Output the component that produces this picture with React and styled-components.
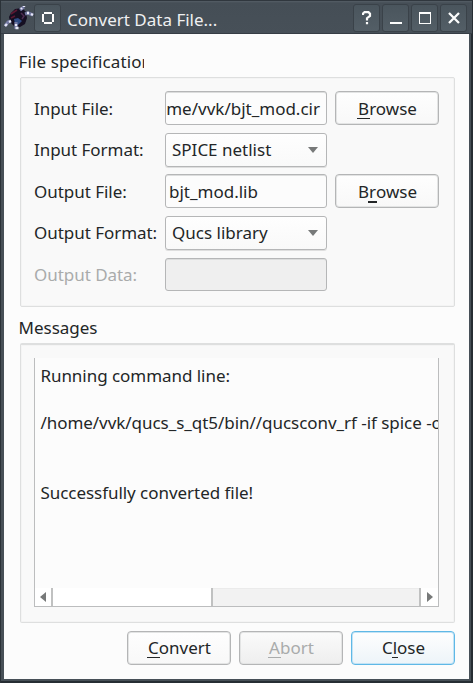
import React from "react";
import styled, { createGlobalStyle } from "styled-components";

const GlobalStyle = createGlobalStyle`
  *, *::before, *::after { box-sizing: border-box; }
  body { margin: 0; background: #2b3137; }
`;

const Window = styled.div`
  width: 473px;
  height: 683px;
  display: flex;
  flex-direction: column;
  padding: 0 4px 4px;
  overflow: hidden;
  font: 17px/24px "Noto Sans", sans-serif;
  letter-spacing: -0.04px;
  color: #232627;
  background: #475057;
  box-shadow: inset 1px 1px 0 #2b3238, inset -2px -2px 0 #262d33;
`;

const TitleBar = styled.header`
  height: 34px;
  flex: none;
  display: flex;
  align-items: flex-start;
  margin: 0 -3px 0 -3px;
  padding: 4px 5px 0 3px;
  border-bottom: 1px solid #363d45;
  background: linear-gradient(#30373e 0, #30373e 1px, #555e66 1px, #454e56 3px, #475058 34px);
`;

const AppIcon = styled.svg`
  width: 30px;
  height: 28px;
  flex: none;
`;

const TitleButton = styled.button`
  width: 27px;
  height: 28px;
  flex: none;
  display: grid;
  place-items: center;
  margin-right: ${(p) => p.$gap ?? 2}px;
  padding: 0;
  border: 1px solid #3a4249;
  border-radius: 3px;
  background: linear-gradient(#4a555d, #535e66);
  svg { display: block; }
`;

const Title = styled.h1`
  flex: 1;
  margin: 0;
  padding-top: 4px;
  font-size: 17px;
  letter-spacing: 0;
  font-weight: 400;
  line-height: 24px;
  color: #eff0f1;
`;

const Body = styled.main`
  flex: 1;
  display: flex;
  flex-direction: column;
  padding: 0 14px 0 16px;
  background: #fcfcfc;
`;

const GroupTitle = styled.h2`
  width: ${(p) => p.$width ?? 200}px;
  height: 24px;
  flex: none;
  margin: ${(p) => p.$top}px 0 0 -2px;
  padding-left: 0.5px;
  overflow: hidden;
  white-space: nowrap;
  font-size: 17px;
  letter-spacing: ${(p) => p.$tracking ?? 0}px;
  font-weight: 400;
`;

const Group = styled.section`
  width: 435px;
  height: ${(p) => p.$height}px;
  flex: none;
  margin-top: ${(p) => p.$top}px;
  padding: ${(p) => p.$pad};
  border: 1px solid #dedfdf;
  border-top-width: ${(p) => p.$edge ?? 1}px;
  border-radius: 2px;
  background: #f9f9f9;
  box-shadow: inset 0 0 0 1px #f4f4f4;
`;

const Form = styled.div`
  display: grid;
  grid-template-columns: 131px 162px 104px;
  grid-template-rows: 34px 34px 34px 34px 33px;
  row-gap: 7.7px;
  column-gap: 0;
`;

const Label = styled.label`
  align-self: center;
  padding-top: ${(p) => (p.$low ? 2 : 0)}px;
  white-space: nowrap;
  color: ${(p) => (p.$disabled ? "#a9abab" : "#232627")};
`;

const Field = styled.div`
  display: flex;
  align-items: center;
  justify-content: ${(p) => (p.$end ? "flex-end" : "flex-start")};
  padding: 2px ${(p) => (p.$end ? 6 : 3)}px 0 ${(p) => (p.$end ? 0 : 3)}px;
  overflow: hidden;
  white-space: nowrap;
  letter-spacing: 0;
  border: 1px solid #b5b6b7;
  border-radius: 3px;
  background: ${(p) => (p.$disabled ? "#efefef" : "#fcfcfc")};
  box-shadow: inset 0 1px 0 #dcdddd;
`;

const Select = styled(Field)`
  justify-content: space-between;
  padding: 0 8px 0 6px;
  background: linear-gradient(#fefefe, #f9f9f9);
  box-shadow: 0 1px 0 #dedede;
`;

const Button = styled.button`
  width: 104px;
  height: 34px;
  flex: none;
  margin-left: ${(p) => p.$left ?? 0}px;
  padding: ${(p) => (p.$low ? "1px 0 0 1px" : "0 0 1px 1px")};
  border: 1px solid ${(p) => (p.$focus ? "#5fb8e6" : "#b4b5b6")};
  border-radius: 4px;
  font: inherit;
  line-height: 24px;
  color: ${(p) => (p.disabled ? "#a9abab" : "#232627")};
  background: ${(p) =>
    p.$focus
      ? "linear-gradient(#fefefe, #edf4f9)"
      : p.disabled
      ? "linear-gradient(#fbfbfb, #eeeeee)"
      : "linear-gradient(#fefefe, #f8f8f8)"};
  box-shadow: inset 0 0 0 1px ${(p) => (p.$focus ? "#c3e3f5" : "#e3e4e4")};
`;

const Mnemonic = styled.span`
  position: relative;
  &::after {
    content: "";
    position: absolute;
    left: -1px;
    right: -1px;
    bottom: ${(p) => (p.$thick ? 0 : 1)}px;
    height: ${(p) => (p.$thick ? 2 : 1)}px;
    background: currentColor;
  }
`;

const Log = styled.div`
  width: 405px;
  height: 249px;
  display: flex;
  flex-direction: column;
  border: 1px solid #bcbdbe;
  border-top: 0;
  background: #fcfcfc;
`;

const LogText = styled.pre`
  height: 230px;
  flex: none;
  margin: 0;
  padding: 6px 0 0 5.4px;
  overflow: hidden;
  font: inherit;
  line-height: 23.4px;
`;

const ScrollBar = styled.div`
  flex: 1;
  display: grid;
  grid-template-columns: 18px 160px 1fr 19px;
  background: #f2f2f2;
`;

const ScrollPart = styled.div`
  display: grid;
  place-items: center;
  border: 0 solid #c0c1c1;
  border-left-width: ${(p) => (p.$left ? 2 : 0)}px;
  border-right-width: ${(p) => (p.$right ? 2 : 0)}px;
  background: ${(p) => (p.$track ? "#f2f2f2" : "#ffffff")};
  border-top: ${(p) => (p.$track ? "1px solid #ebebeb" : "0")};
`;

const Actions = styled.footer`
  display: flex;
  justify-content: flex-end;
  gap: 8px;
  margin-top: 8px;
  margin-right: -1px;
  padding-right: 1px;
`;

const DropArrow = () => (
  <svg width="10" height="6" viewBox="0 0 10 6">
    <path d="M0 0h10L5 6z" fill="#777979" />
  </svg>
);

export default function App() {
  return (
    <>
      <GlobalStyle />
      <Window>
        <TitleBar>
          <AppIcon viewBox="0 0 30 28">
            <path d="M7 9l4-4 7-1 4 4 1 6-2 6-5 3-6-1-4-4-1-5z" fill="#150f22" />
            <path d="M7 10l6-4M7 14l4-2" stroke="#5c1832" strokeWidth="1.6" />
            <path d="M10 15l4-1 4 3-4 4-3-1z" fill="#2f4b83" />
            <path d="M17 9l3 3-2 3" stroke="#4d2c50" strokeWidth="1.5" fill="none" />
            <path d="M1 22l3-4 3-1M16 6l4-3M21 10l3-1 5 2M12 18v7" stroke="#7479a3" strokeWidth="3.2" fill="none" />
            <path d="M1 22l2-2M5 18l2-1M17 5l1-1M20 3V2M23 9l2 0M27 10l2 1M12 20v2M11.5 24h3" stroke="#e6e7f7" strokeWidth="2.4" />
          </AppIcon>
          <TitleButton $gap={6}>
            <svg width="12" height="12" viewBox="0 0 12 12">
              <path d="M2 1h8M2 11h8M1 2v8M11 2v8" fill="none" stroke="#fcfcfc" strokeWidth="2" />
            </svg>
          </TitleButton>
          <Title>Convert Data File...</Title>
          <TitleButton>
            <svg width="10" height="14" viewBox="0 0 10 14">
              <path d="M1 4V2.5L2.5 1.2h4L8 2.8V5L5 7.2V9.5M5 11v2.2" fill="none" stroke="#fcfcfc" strokeWidth="2.2" />
            </svg>
          </TitleButton>
          <TitleButton>
            <svg width="12" height="12" viewBox="0 0 12 12">
              <path d="M0 11h12" stroke="#fcfcfc" strokeWidth="2" />
            </svg>
          </TitleButton>
          <TitleButton>
            <svg width="12" height="12" viewBox="0 0 12 12">
              <path d="M.5 0v12M11.5 0v12M0 11.5h12" stroke="#fcfcfc" />
              <path d="M0 1h12" stroke="#fcfcfc" strokeWidth="2" />
            </svg>
          </TitleButton>
          <TitleButton $gap={0}>
            <svg width="12" height="12" viewBox="0 0 12 12">
              <path d="M1 1l10 10M11 1L1 11" stroke="#fcfcfc" strokeWidth="2.3" />
            </svg>
          </TitleButton>
        </TitleBar>
        <Body>
          <GroupTitle $top={16} $width={126} $tracking={0.12}>File specification</GroupTitle>
          <Group $top={3} $height={230} $pad="13px 0 0 13px">
            <Form>
              <Label $low>Input File:</Label>
              <Field $end>/home/vvk/bjt_mod.cir</Field>
              <Button $left={8} $low><Mnemonic>B</Mnemonic>rowse</Button>
              <Label>Input Format:</Label>
              <Select>SPICE netlist<DropArrow /></Select>
              <span />
              <Label $low>Output File:</Label>
              <Field>bjt_mod.lib</Field>
              <Button $left={8} $low>B<Mnemonic $thick>r</Mnemonic>owse</Button>
              <Label>Output Format:</Label>
              <Select>Qucs library<DropArrow /></Select>
              <span />
              <Label $low $disabled>Output Data:</Label>
              <Field $disabled />
            </Form>
          </Group>
          <GroupTitle $top={9}>Messages</GroupTitle>
          <Group $top={3} $height={280} $edge={2} $pad="13px 0 0 13px">
            <Log>
              <LogText>{`Running command line:

/home/vvk/qucs_s_qt5/bin//qucsconv_rf -if spice -of qucslib


Successfully converted file!`}</LogText>
              <ScrollBar>
                <ScrollPart $right>
                  <svg width="6" height="10" viewBox="0 0 6 10"><path d="M6 0v10L0 5z" fill="#777979" /></svg>
                </ScrollPart>
                <ScrollPart $right />
                <ScrollPart $track />
                <ScrollPart $left>
                  <svg width="6" height="10" viewBox="0 0 6 10"><path d="M0 0v10l6-5z" fill="#777979" /></svg>
                </ScrollPart>
              </ScrollBar>
            </Log>
          </Group>
          <Actions>
            <Button><Mnemonic>C</Mnemonic>onvert</Button>
            <Button disabled><Mnemonic>A</Mnemonic>bort</Button>
            <Button $focus>C<Mnemonic>l</Mnemonic>ose</Button>
          </Actions>
        </Body>
      </Window>
    </>
  );
}
